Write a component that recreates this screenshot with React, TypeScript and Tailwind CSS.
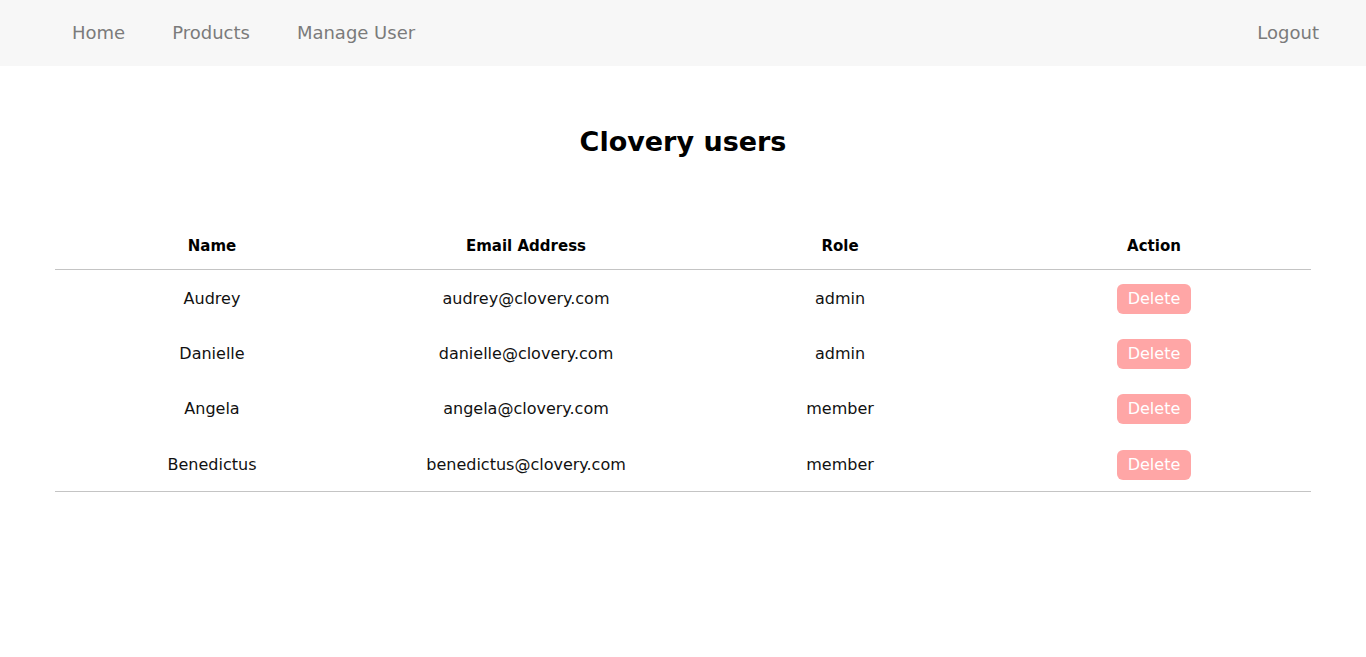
const users = [
  { name: "Audrey", email: "audrey@clovery.com", role: "admin" },
  { name: "Danielle", email: "danielle@clovery.com", role: "admin" },
  { name: "Angela", email: "angela@clovery.com", role: "member" },
  { name: "Benedictus", email: "benedictus@clovery.com", role: "member" },
];

function NavBar() {
  return (
    <nav className="h-[66px] bg-[#f7f7f7] flex items-center justify-between pl-[72px] pr-[47px] pb-[1px] text-[18px] text-[#7b7b7b]">
      <div className="flex items-center gap-[47px]">
        <a href="#">Home</a>
        <a href="#">Products</a>
        <a href="#">Manage User</a>
      </div>
      <a href="#">Logout</a>
    </nav>
  );
}

export default function App() {
  return (
    <div
      className="min-h-screen bg-white"
      style={{ fontFamily: '"DejaVu Sans", sans-serif' }}
    >
      <NavBar />
      <main className="px-[55px]">
        <h1 className="text-center text-[27px] font-bold text-black pt-[55px] pb-[60px] leading-[42px]">
          Clovery users
        </h1>
        <table className="w-full table-fixed border-collapse text-[16px] text-[#111]">
          <thead>
            <tr className="border-b border-[#c4c4c4]">
              <th className="h-[46px] text-[15px] font-bold text-black">Name</th>
              <th className="h-[46px] text-[15px] font-bold text-black">Email Address</th>
              <th className="h-[46px] text-[15px] font-bold text-black">Role</th>
              <th className="h-[46px] text-[15px] font-bold text-black">Action</th>
            </tr>
          </thead>
          <tbody className="border-b border-[#c4c4c4]">
            {users.map((u) => (
              <tr key={u.email} className="h-[55.5px]">
                <td className="text-center pt-[3px]">{u.name}</td>
                <td className="text-center pt-[3px]">{u.email}</td>
                <td className="text-center pt-[3px]">{u.role}</td>
                <td className="text-center pt-[3px]">
                  <button className="h-[30px] px-[11px] rounded-[6px] bg-[#ffa6a6] text-white">
                    Delete
                  </button>
                </td>
              </tr>
            ))}
          </tbody>
        </table>
      </main>
    </div>
  );
}
